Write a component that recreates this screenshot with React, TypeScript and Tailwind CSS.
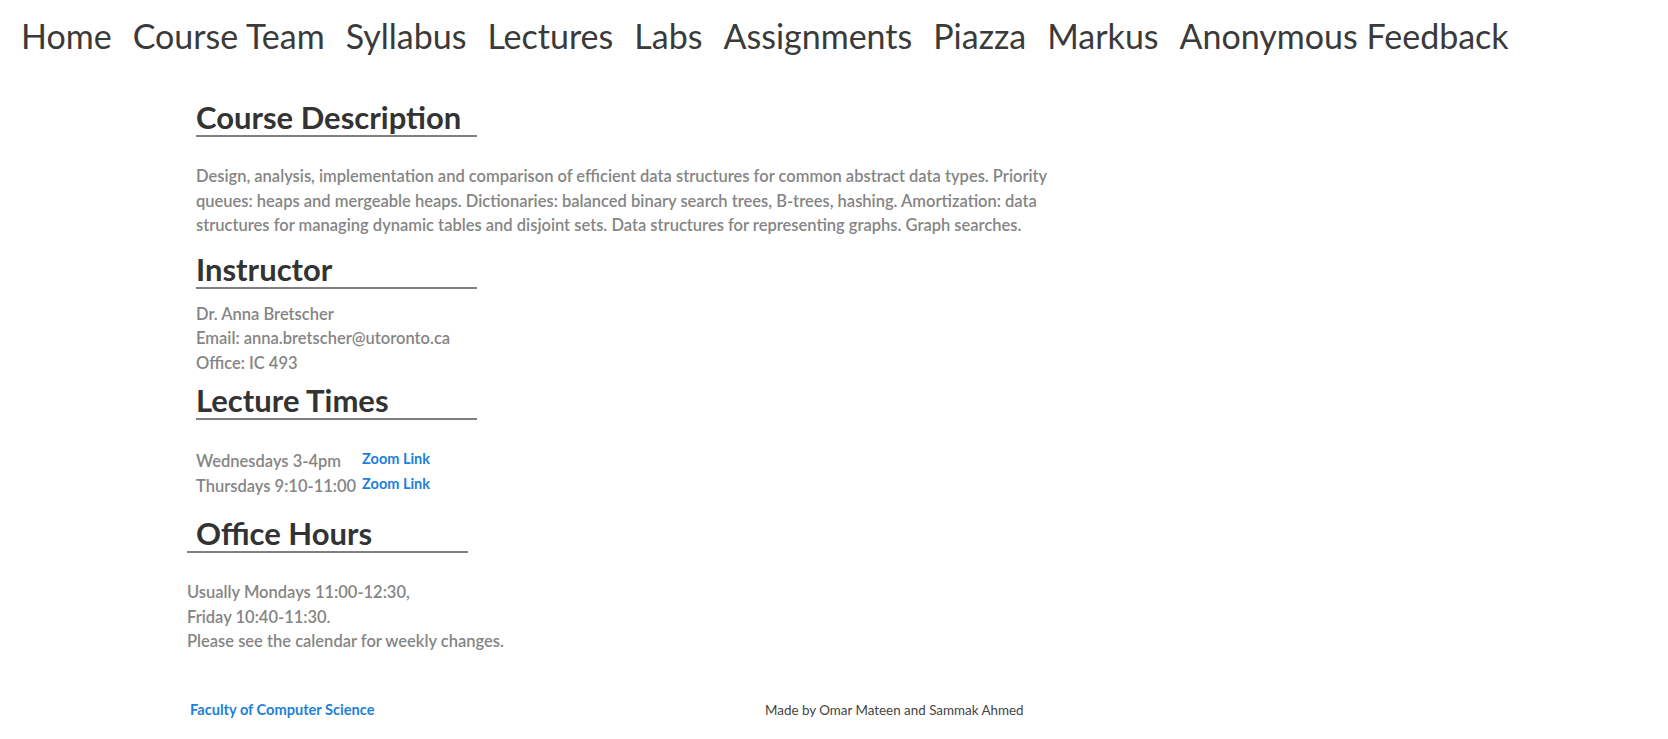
const nav = [
  "Home",
  "Course Team",
  "Syllabus",
  "Lectures",
  "Labs",
  "Assignments",
  "Piazza",
  "Markus",
  "Anonymous Feedback",
];

function Heading({ children }: { children: React.ReactNode }) {
  return (
    <h2 className="w-[281px] border-b-2 border-[#808080] text-[31px] font-bold leading-[36px] text-[#333]">
      {children}
    </h2>
  );
}

export default function App() {
  return (
    <div className="min-h-screen bg-white font-['Lato',sans-serif]">
      <nav className="flex gap-[21px] pl-[21px] pt-[14px] text-[34px] leading-[44px] text-[#3a3a3a]">
        {nav.map((item) => (
          <a key={item} href="#">
            {item}
          </a>
        ))}
      </nav>

      <main className="pl-[196px] pt-[41px] text-[16.5px] font-semibold leading-[24.5px] text-[#858585]">
        <section>
          <Heading>Course Description</Heading>
          <p className="mt-[27px] w-[875px]">
            Design, analysis, implementation and comparison of efficient data
            structures for common abstract data types. Priority queues: heaps
            and mergeable heaps. Dictionaries: balanced binary search trees,
            B-trees, hashing. Amortization: data structures for managing dynamic
            tables and disjoint sets. Data structures for representing graphs.
            Graph searches.
          </p>
        </section>

        <section className="mt-[13px]">
          <Heading>Instructor</Heading>
          <div className="mt-[13px]">
            <p>Dr. Anna Bretscher</p>
            <p>Email: anna.bretscher@utoronto.ca</p>
            <p>Office: IC 493</p>
          </div>
        </section>

        <section className="mt-[7px]">
          <Heading>Lecture Times</Heading>
          <div className="mt-[29px] grid grid-cols-[auto_auto] justify-start gap-x-[6px]">
            <span>Wednesdays 3-4pm</span>
            <a href="#" className="mb-[5px] self-center text-[14.5px] font-bold leading-[18px] text-[#1e7fdb]">
              Zoom Link
            </a>
            <span>Thursdays 9:10-11:00</span>
            <a href="#" className="mb-[3px] self-center text-[14.5px] font-bold leading-[18px] text-[#1e7fdb]">
              Zoom Link
            </a>
          </div>
        </section>

        <section className="-ml-[9px] mt-[17px]">
          <div className="w-[281px] border-b-2 border-[#808080] pl-[9px]">
            <h2 className="text-[31px] font-bold leading-[36px] text-[#333]">Office Hours</h2>
          </div>
          <div className="mt-[27px]">
            <p>Usually Mondays 11:00-12:30,</p>
            <p>Friday 10:40-11:30.</p>
            <p>Please see the calendar for weekly changes.</p>
          </div>
        </section>
      </main>

      <footer className="grid grid-cols-[575px_auto] pl-[190px] pt-[46px] pb-[20px] leading-[20px]">
        <a href="#" className="text-[14.6px] font-bold text-[#1e7fdb]">
          Faculty of Computer Science
        </a>
        <span className="text-[13.4px] text-[#444]">Made by Omar Mateen and Sammak Ahmed</span>
      </footer>
    </div>
  );
}
